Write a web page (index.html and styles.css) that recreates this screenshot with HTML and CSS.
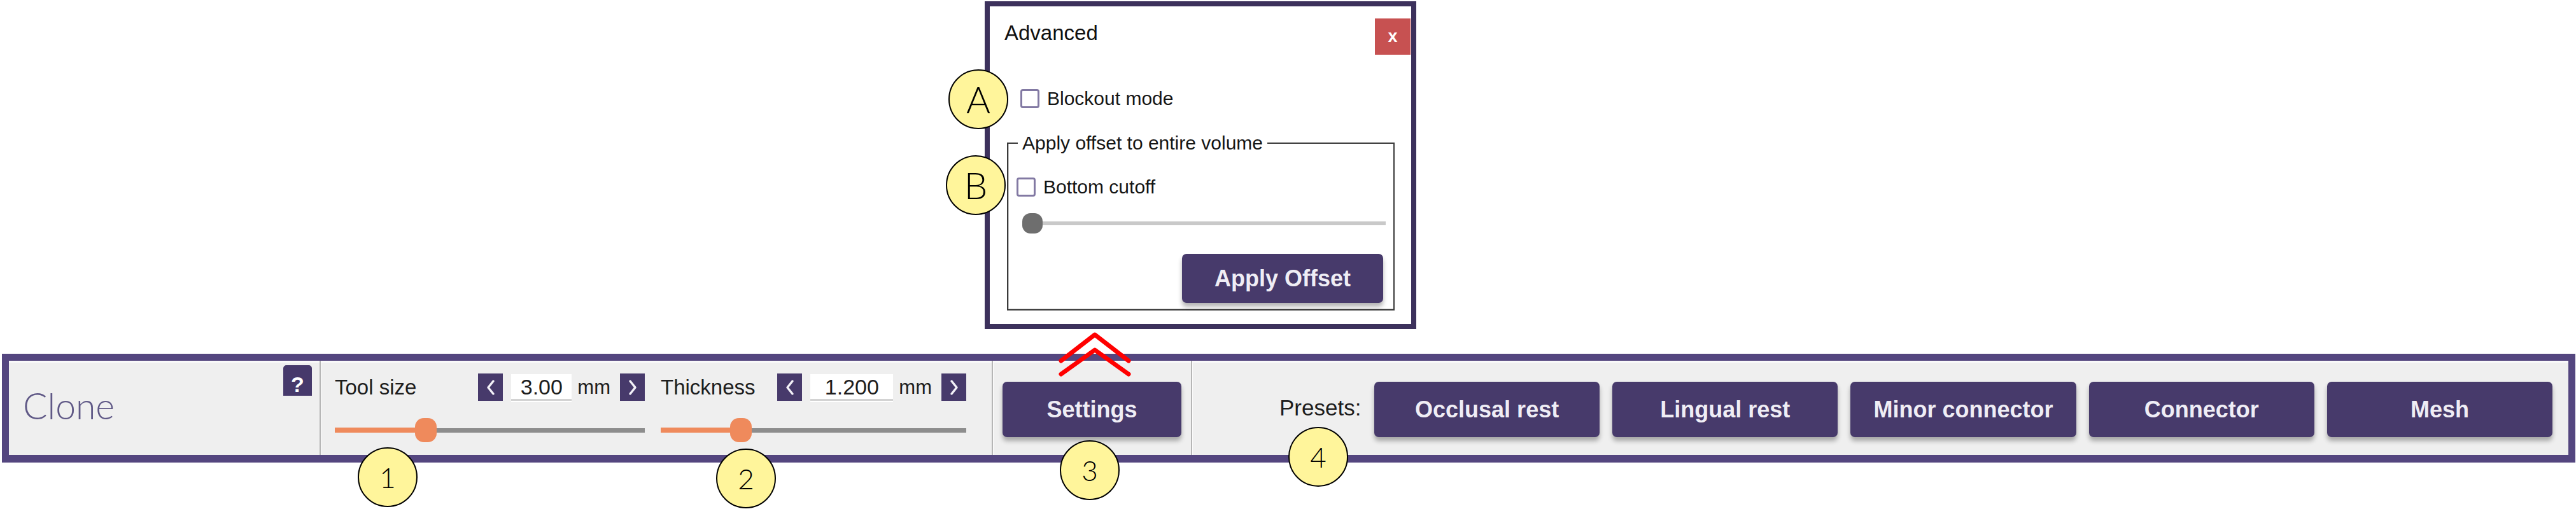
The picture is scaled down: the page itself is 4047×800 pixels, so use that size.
FILE: index.html
```html
<!DOCTYPE html>
<html lang="en">
<head>
    <meta charset="UTF-8">
    <meta name="viewport" content="width=device-width, initial-scale=1.0">
    <title>Clone tool</title>
    <link rel="stylesheet" href="styles.css">
</head>
<body>
    <!-- Advanced settings popup -->
    <div class="popup-area">
        <div class="dialog">
            <div class="dialog-head">
                <span class="dialog-title">Advanced</span>
                <button class="close-btn">x</button>
            </div>
            <label class="check-row blockout"><span class="check"></span>Blockout mode</label>
            <fieldset class="offset-group">
                <legend>Apply offset to entire volume</legend>
                <label class="check-row cutoff"><span class="check"></span>Bottom cutoff</label>
                <div class="mini-slider">
                    <span class="mini-thumb"></span>
                    <span class="mini-track"></span>
                </div>
                <div class="offset-actions">
                    <button class="btn apply-btn">Apply Offset</button>
                </div>
            </fieldset>
        </div>
    </div>

    <!-- Tool bar -->
    <div class="toolbar">
        <div class="tool-title">
            <span class="tool-name">Clone</span>
            <span class="help">?</span>
        </div>

        <div class="section sizes">
            <div class="control control-size">
                <div class="control-head">
                    <span class="label">Tool size</span>
                    <div class="spinner">
                        <button class="step"><svg width="20" height="26" viewBox="0 0 20 26"><polyline points="14,3 6,13 14,23" /></svg></button>
                        <span class="value value-short">3.00</span>
                        <span class="unit">mm</span>
                        <button class="step"><svg width="20" height="26" viewBox="0 0 20 26"><polyline points="6,3 14,13 6,23" /></svg></button>
                    </div>
                </div>
                <div class="slider">
                    <span class="fill" style="width: 126px"></span>
                    <span class="thumb"></span>
                    <span class="rest"></span>
                </div>
            </div>

            <div class="control control-thick">
                <div class="control-head">
                    <span class="label">Thickness</span>
                    <div class="spinner">
                        <button class="step"><svg width="20" height="26" viewBox="0 0 20 26"><polyline points="14,3 6,13 14,23" /></svg></button>
                        <span class="value value-long">1.200</span>
                        <span class="unit">mm</span>
                        <button class="step"><svg width="20" height="26" viewBox="0 0 20 26"><polyline points="6,3 14,13 6,23" /></svg></button>
                    </div>
                </div>
                <div class="slider">
                    <span class="fill" style="width: 109px"></span>
                    <span class="thumb"></span>
                    <span class="rest"></span>
                </div>
            </div>
        </div>

        <div class="section settings">
            <button class="btn settings-btn">Settings</button>
        </div>

        <div class="section presets">
            <span class="presets-label">Presets:</span>
            <div class="preset-list">
                <button class="btn">Occlusal rest</button>
                <button class="btn">Lingual rest</button>
                <button class="btn">Minor connector</button>
                <button class="btn">Connector</button>
                <button class="btn">Mesh</button>
            </div>
        </div>
    </div>

    <!-- Annotations -->
    <svg class="expand-arrows" width="120" height="80" viewBox="0 0 120 80">
        <polyline points="7,52 60,11 113,52" />
        <polyline points="7,73 60,35 113,73" />
    </svg>
    <span class="callout callout-letter callout-a">A</span>
    <span class="callout callout-letter callout-b">B</span>
    <span class="callout callout-1">1</span>
    <span class="callout callout-2">2</span>
    <span class="callout callout-3">3</span>
    <span class="callout callout-4">4</span>
</body>
</html>
```

FILE: styles.css
```css
body {
    margin: 0;
    width: 4047px;
    height: 800px;
    position: relative;
    overflow: hidden;
    background-color: #ffffff;
    font-family: "Liberation Sans", Arial, sans-serif;
    color: #151515;
}
button {
    border: none;
    padding: 0;
    font-family: inherit;
}

/* popup */
.popup-area {
    height: 556px;
    padding: 2px 0 0 1547px;
    box-sizing: border-box;
}
.dialog {
    width: 678px;
    height: 515px;
    box-sizing: border-box;
    border: 8px solid #3c315c;
    background-color: #ffffff;
    display: flex;
    flex-direction: column;
}
.dialog-head {
    display: flex;
    justify-content: space-between;
    align-items: flex-start;
    padding: 19px 1px 0 23px;
}
.dialog-title {
    font-size: 33px;
    line-height: 38px;
    margin-top: 4px;
    color: #111111;
}
.close-btn {
    width: 56px;
    height: 57px;
    background-color: #c75151;
    color: #ffffff;
    font-size: 27px;
    font-weight: bold;
    line-height: 57px;
}
.check-row {
    display: flex;
    align-items: center;
    font-size: 30px;
    line-height: 34px;
    color: #151515;
}
.check {
    width: 30px;
    height: 30px;
    box-sizing: border-box;
    border: 3px solid #8279a3;
    border-radius: 4px;
    background-color: #ffffff;
    margin-right: 12px;
    flex: none;
}
.blockout {
    margin: 52px 0 0 48px;
}
.offset-group {
    margin: 36px 26px 0 27px;
    padding: 0;
    min-width: 0;
    border: 2px solid #3a3a3a;
    box-shadow: inset 1px -1px 0 #c6c6c6;
}
.offset-group legend {
    margin-left: 15px;
    padding: 0 7px;
    font-size: 30px;
    line-height: 34px;
    color: #151515;
}
.cutoff {
    margin: 35px 0 0 13px;
}
.mini-slider {
    display: flex;
    align-items: center;
    height: 32px;
    margin: 24px 12px 0 22px;
}
.mini-thumb {
    width: 32px;
    height: 32px;
    border-radius: 13px;
    background-color: #6e6e6e;
    flex: none;
}
.mini-track {
    flex: 1;
    height: 6px;
    background-color: #c9c9c9;
}
.offset-actions {
    display: flex;
    justify-content: flex-end;
    margin: 32px 16px 10px 0;
}
.apply-btn {
    width: 316px;
    height: 77px;
    font-size: 32px;
}

/* shared purple button */
.btn {
    background-color: #473a6b;
    color: #efedf5;
    border-radius: 7px;
    font-size: 36px;
    font-weight: bold;
    box-shadow: 0 6px 7px rgba(0, 0, 0, 0.3);
    cursor: pointer;
}

/* toolbar */
.toolbar {
    width: 4043px;
    height: 171px;
    margin-left: 3px;
    box-sizing: border-box;
    border: 11px solid #54467f;
    border-bottom-width: 12px;
    background-color: #efefef;
    box-shadow: inset 0 3px 0 #fafafa;
    display: flex;
}
.tool-title {
    width: 488px;
    flex: none;
    box-sizing: border-box;
    display: flex;
    justify-content: space-between;
    align-items: flex-start;
    padding: 7px 12px 0 22px;
}
.tool-name {
    align-self: center;
    margin-bottom: 15px;
    font-family: "Lato", "Liberation Sans", sans-serif;
    font-weight: 300;
    font-size: 57px;
    line-height: 1;
    color: #5f5886;
}
.help {
    width: 45px;
    height: 48px;
    box-sizing: border-box;
    padding-top: 13px;
    background-color: #46396b;
    border-radius: 5px 5px 0 0;
    color: #ffffff;
    font-size: 34px;
    font-weight: bold;
    line-height: 35px;
    text-align: center;
}
.section {
    border-left: 2px solid #b6b6b6;
    box-shadow: inset 1px 0 0 #fcfcfc;
    flex: none;
}
.sizes {
    display: flex;
    gap: 25px;
    padding: 20px 40px 0 22px;
}
.control {
    display: flex;
    flex-direction: column;
}
.control-size {
    width: 487px;
}
.control-thick {
    width: 480px;
}
.control-head {
    display: flex;
    align-items: center;
    justify-content: space-between;
    height: 43px;
}
.label, .unit, .value, .presets-label {
    color: #1d1d1d;
}
.label {
    font-size: 33px;
}
.spinner {
    display: flex;
    align-items: center;
}
.step {
    width: 39px;
    height: 43px;
    background-color: #473a6b;
    display: flex;
    align-items: center;
    justify-content: center;
}
.step polyline {
    fill: none;
    stroke: #f3f1f8;
    stroke-width: 3.5;
    stroke-linecap: round;
    stroke-linejoin: round;
}
.value {
    height: 42px;
    box-sizing: border-box;
    background-color: #ffffff;
    border-bottom: 3px solid #d3d3d3;
    box-shadow: 0 2px 0 #ffffff;
    margin: 0 9px 0 13px;
    text-align: center;
    font-size: 34px;
    line-height: 40px;
}
.value-short {
    width: 95px;
}
.value-long {
    width: 130px;
}
.unit {
    font-size: 31px;
    margin-right: 15px;
}
.slider {
    display: flex;
    align-items: center;
    height: 38px;
    margin-top: 27px;
}
.fill {
    height: 8px;
    background-color: #ef8a5c;
    flex: none;
}
.thumb {
    width: 34px;
    height: 38px;
    border-radius: 14px;
    background-color: #ef8a5c;
    flex: none;
}
.rest {
    flex: 1;
    height: 7px;
    background-color: #8d8d8d;
}
.settings {
    display: flex;
    align-items: center;
    padding: 5px 15px 0 15px;
}
.settings-btn {
    width: 281px;
    height: 87px;
}
.presets {
    flex: 1;
    display: flex;
    align-items: center;
    padding: 5px 25px 0 137px;
}
.presets-label {
    width: 149px;
    flex: none;
    font-size: 35px;
    margin-bottom: 6px;
}
.preset-list {
    flex: 1;
    display: flex;
    gap: 20px;
}
.preset-list .btn {
    flex: 1;
    height: 87px;
}

/* annotations */
.expand-arrows {
    position: absolute;
    left: 1660px;
    top: 515px;
}
.expand-arrows polyline {
    fill: none;
    stroke: #ff0000;
    stroke-width: 7;
    stroke-linecap: round;
    stroke-linejoin: round;
}
.callout {
    position: absolute;
    width: 94px;
    height: 94px;
    box-sizing: border-box;
    border: 2px solid #000000;
    border-radius: 50%;
    background-color: #fff59b;
    display: flex;
    align-items: center;
    justify-content: center;
    font-family: "Lato", "Liberation Sans", sans-serif;
    font-weight: 300;
    font-size: 44px;
    line-height: 1;
    color: #000000;
}
.callout-letter {
    font-size: 58px;
}
.callout-a { left: 1490px; top: 109px; }
.callout-b { left: 1486px; top: 244px; }
.callout-1 { left: 562px; top: 703px; }
.callout-2 { left: 1125px; top: 705px; }
.callout-3 { left: 1665px; top: 692px; }
.callout-4 { left: 2024px; top: 671px; }
```
